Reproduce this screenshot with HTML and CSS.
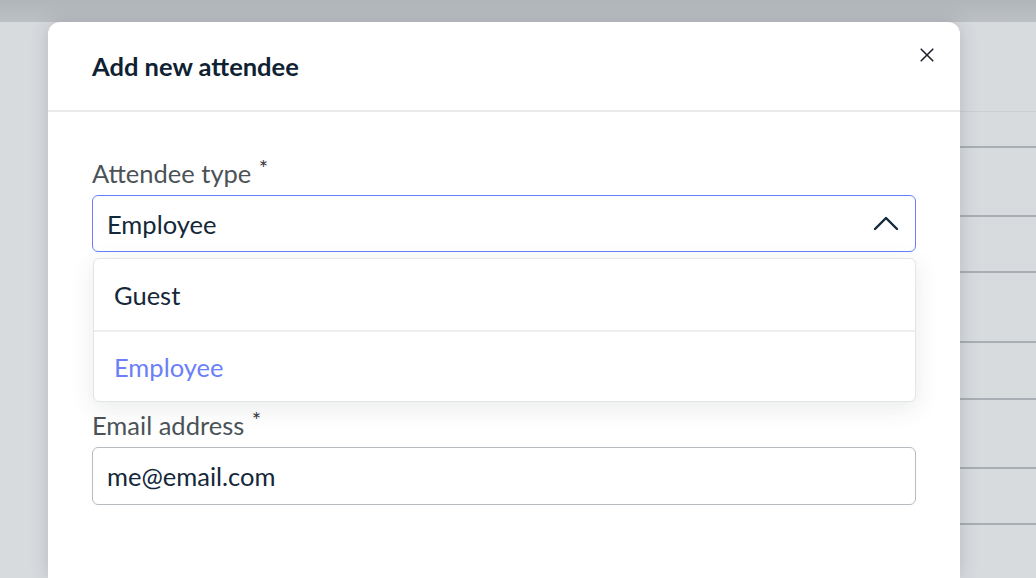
FILE: index.html
```html
<!DOCTYPE html>
<html lang="en">
<head>
<meta charset="utf-8">
<title>Add new attendee</title>
<link rel="stylesheet" href="styles.css">
</head>
<body>
<div class="backdrop">
  <div class="topband"></div>
  <div class="page">
    <div class="page-side"></div>
    <div class="table">
      <div class="row head"></div>
      <div class="row r0"></div>
      <div class="row r1"></div>
      <div class="row r2"></div>
      <div class="row r1b"></div>
      <div class="row r2b"></div>
      <div class="row r1"></div>
      <div class="row r2"></div>
    </div>
  </div>
</div>
<div class="modal">
  <div class="modal-header">
    <h2 class="modal-title">Add new attendee</h2>
    <button class="close" aria-label="Close">
      <svg width="14" height="14" viewBox="0 0 14 14"><path d="M1.2 1.2 L12.8 12.8 M12.8 1.2 L1.2 12.8" stroke="#23232e" stroke-width="1.6" stroke-linecap="round" fill="none"/></svg>
    </button>
  </div>
  <div class="modal-body">
    <div class="field field-type">
      <label class="label">Attendee type <span class="req">*</span></label>
      <div class="select-wrap">
        <div class="select">
          <span class="select-value">Employee</span>
          <svg class="chev" width="26" height="16" viewBox="0 0 26 16"><path d="M2 14 L13 3 L24 14" stroke="#13283a" stroke-width="2.4" fill="none" stroke-linecap="round" stroke-linejoin="round"/></svg>
        </div>
        <ul class="menu">
          <li class="option">Guest</li>
          <li class="option selected">Employee</li>
        </ul>
      </div>
    </div>
    <div class="field">
      <label class="label">Email address <span class="req">*</span></label>
      <div class="input">me@email.com</div>
    </div>
  </div>
</div>
</body>
</html>
```

FILE: styles.css
```css
* { box-sizing: border-box; }
html, body { margin: 0; padding: 0; }
body {
  width: 1036px;
  height: 578px;
  overflow: hidden;
  background: #d8dbde;
  font-family: Lato, "Noto Sans", sans-serif;
  position: relative;
}
.backdrop { position: absolute; inset: 0; }
.topband {
  height: 22px;
  background: linear-gradient(#b0b5b9, #bdc1c5);
}
.page { display: flex; }
.page-side { width: 600px; flex: none; }
.table { flex: 1; display: flex; flex-direction: column; }
.row { border-bottom: 2px solid #a8aeb3; }
.row.head { height: 90px; border-bottom: 1px solid #cbcfd3; }
.r0 { height: 36px; }
.r1 { height: 69px; }
.r2 { height: 56px; }
.r1b { height: 70px; }
.r2b { height: 57px; }
.modal {
  position: absolute;
  left: 48px;
  top: 22px;
  width: 912px;
  height: 556px;
  background: #fff;
  border-radius: 12px 12px 0 0;
  box-shadow: 0 0 18px rgba(60, 70, 80, 0.22);
}
.modal-header {
  height: 90px;
  padding: 0 26px 0 44px;
  display: flex;
  align-items: center;
  justify-content: space-between;
  border-bottom: 2px solid #e9eaec;
}
.modal-title {
  margin: 0;
  font-size: 25.5px;
  font-weight: 700;
  color: #0f2233;
}
.close {
  background: none;
  border: 0;
  padding: 0;
  width: 14px;
  height: 14px;
  margin-top: -23px;
  display: flex;
}
.modal-body {
  padding: 41px 44px 0 44px;
}
.field { display: flex; flex-direction: column; }
.field-type { margin-bottom: 153px; }
.label {
  font-size: 25.5px;
  line-height: 29px;
  color: #4b5358;
  margin-bottom: 7px;
}
.req { font-size: 22px; vertical-align: 7px; margin-left: 1px; color: #33393e; }
.select-wrap { position: relative; }
.select {
  height: 57px;
  border: 1.6px solid #6b7ffb;
  border-radius: 6px;
  display: flex;
  align-items: center;
  justify-content: space-between;
  padding: 0 16px 0 14px;
}
.select-value, .input {
  font-size: 25.5px;
  color: #13283a;
}
.chev { margin-top: -2px; }
.menu {
  position: absolute;
  left: 1px;
  right: 0;
  top: 63px;
  margin: 0;
  padding: 0;
  list-style: none;
  background: #fff;
  border: 1px solid #e2e4e6;
  border-radius: 6px;
  box-shadow: 0 6px 24px rgba(40, 50, 60, 0.10);
}
.option {
  height: 71px;
  display: flex;
  align-items: center;
  padding: 0 20px;
  font-size: 25.5px;
  color: #13283a;
}
.option + .option { border-top: 2px solid #eceef0; }
.option.selected { color: #6b7ff9; }
.input {
  height: 58px;
  border: 1.6px solid #b7bcc1;
  border-radius: 6px;
  display: flex;
  align-items: center;
  padding: 0 14px;
}
```
